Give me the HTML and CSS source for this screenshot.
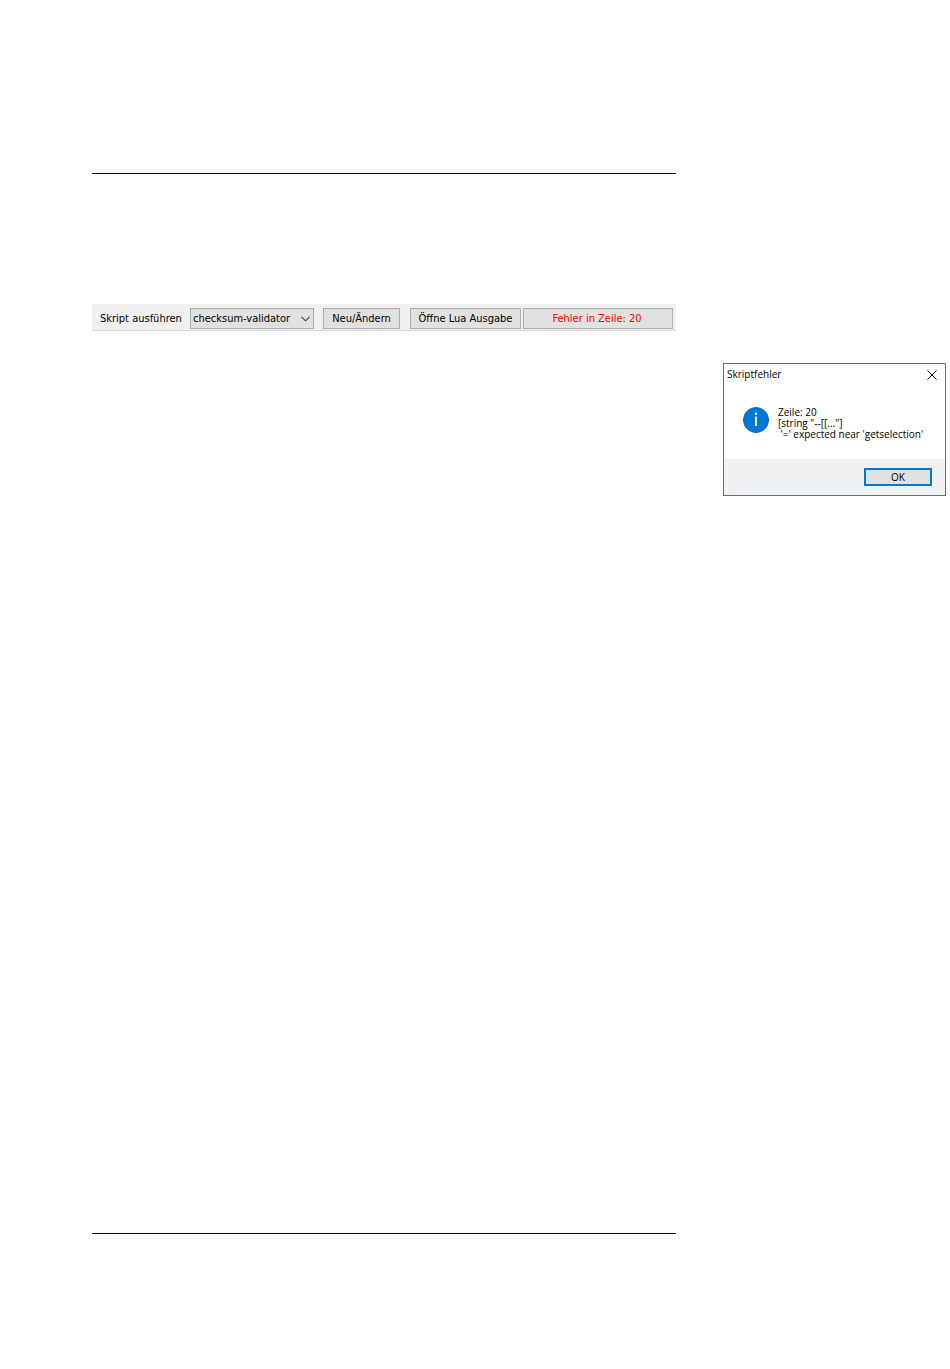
FILE: index.html
```html
<!DOCTYPE html>
<html lang="de">
<head>
  <meta charset="UTF-8" />
  <meta name="viewport" content="width=device-width, initial-scale=1" />
  <title>Skriptfehler</title>
  <link rel="stylesheet" href="styles.css">
</head>
<body>

  <main>
    <form class="toolbar">
      <label for="skript">Skript ausführen</label>
      <div class="select">
        <select id="skript">
          <option>checksum-validator</option>
        </select>
        <svg width="9" height="6" viewBox="0 0 9 6" aria-hidden="true">
          <path d="M0.5 0.8 L4.5 4.8 L8.5 0.8" fill="none" stroke="#444" stroke-width="1.1" />
        </svg>
      </div>
      <button type="button" class="edit">Neu/Ändern</button>
      <button type="button" class="output">Öffne Lua Ausgabe</button>
      <button type="button" class="error">Fehler in Zeile: 20</button>
    </form>
  </main>

  <aside>
    <section class="dialog" role="dialog" aria-labelledby="dialogTitle">
      <header>
        <span id="dialogTitle">Skriptfehler</span>
        <button type="button" class="close" aria-label="Schließen">
          <svg width="10" height="10" viewBox="0 0 10 10">
            <path d="M0.5 0.5 L9.5 9.5 M9.5 0.5 L0.5 9.5" fill="none" stroke="#000" />
          </svg>
        </button>
      </header>
      <div class="message">
        <svg width="26" height="26" viewBox="0 0 26 26" aria-hidden="true">
          <circle cx="13" cy="13" r="12.5" fill="#0078d7" stroke="#0a63b1" />
          <path d="M13 9.5 V19" stroke="#fff" stroke-width="1.8" />
          <circle cx="13" cy="6.8" r="1.2" fill="#fff" />
        </svg>
        <p>Zeile: 20
[string "--[[..."]
 '=' expected near 'getselection'</p>
      </div>
      <footer>
        <button type="button" class="ok">OK</button>
      </footer>
    </section>
  </aside>

</body>
</html>
```
FILE: styles.css
```css
* {
  box-sizing: border-box;
}

body {
  margin: 0;
  min-height: 100vh;
  padding: 0 4px 0 92px;
  display: grid;
  grid-template-columns: 1fr 223px;
  column-gap: 47px;
  background: #fff;
  color: #000;
}

button, select {
  font: inherit;
  color: inherit;
  border-radius: 0;
}

/* the lines at the head and foot of the page */
main {
  margin: 173px 0 135px;
  padding-top: 130px;
  border-top: 1px solid #000;
  border-bottom: 1px solid #000;
}

/* toolbar */
.toolbar {
  display: flex;
  align-items: center;
  padding: 4px 3px 1px 8px;
  background: #f0f0f0;
  border-bottom: 1px solid #d8d8d8;
  font-family: "DejaVu Sans Condensed", Tahoma, sans-serif;
  font-size: 11px;
  line-height: 13px;
  white-space: nowrap;
}

.toolbar label {
  width: 90px;
}

.toolbar button,
.toolbar select {
  height: 21px;
  padding: 0 2px;
  border: 1px solid #adadad;
  background: #e1e1e1;
}

.select {
  position: relative;
  width: 124px;
  margin-right: 9px;
}

.select select {
  display: block;
  width: 100%;
  appearance: none;
}

.select svg {
  position: absolute;
  top: 8px;
  right: 4px;
  pointer-events: none;
}

.toolbar .edit {
  width: 77px;
  margin-right: 10px;
}

.toolbar .output {
  width: 111px;
  margin-right: 2px;
}

.toolbar .error {
  flex: 1;
  padding-right: 4px;
  color: #f00;
}

/* message box */
aside {
  padding-top: 363px;
}

.dialog {
  border: 1px solid #1883d7;
  font-family: "Open Sans", "Segoe UI", sans-serif;
  font-size: 10px;
  line-height: 11px;
}

.dialog header {
  display: flex;
  justify-content: space-between;
  align-items: center;
  height: 21px;
  padding: 0 8px 0 3px;
}

.close {
  display: flex;
  padding: 0;
  border: none;
  background: none;
}

.message {
  display: flex;
  gap: 9px;
  height: 74px;
  padding: 22px 0 0 19px;
}

.message p {
  margin: 0;
  white-space: pre;
}

.dialog footer {
  display: flex;
  justify-content: flex-end;
  padding: 9px 13px;
  background: #f0f0f0;
}

.ok {
  width: 68px;
  height: 18px;
  padding: 0;
  border: 2px solid #0078d7;
  background: #e1e1e1;
  line-height: 14px;
}
```
